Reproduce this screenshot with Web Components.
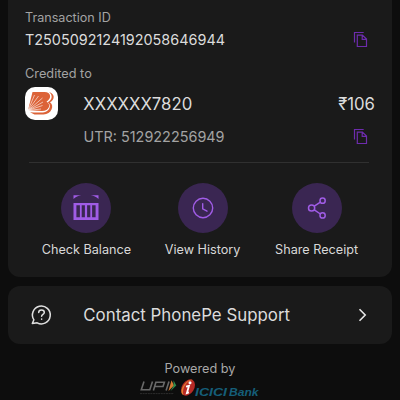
<!DOCTYPE html>
<html lang="en">
<head>
<meta charset="utf-8">
<title>Transaction details</title>
<style>
html,body{margin:0;height:400px;overflow:hidden;background:#0d0d0d}
body{font-family:Inter,"Noto Sans",sans-serif;color:#dcdcdc}
</style>
</head>
<body>
<receipt-page></receipt-page>
<script>
function define(name, html) {
  const template = document.createElement('template');
  template.innerHTML = html;
  customElements.define(name, class extends HTMLElement {
    constructor() {
      super();
      this.attachShadow({ mode: 'open' }).append(template.content.cloneNode(true));
    }
  });
}

define('copy-icon', `<style>:host{display:block;width:16px;height:18px}svg{display:block}</style>
<svg width="16" height="18" viewBox="0 0 16 18" fill="none" stroke="#6d2cad" stroke-width="1.2">
<path d="M1.5 11.500V1.500h9.200M4.300 4.100h5.100l4.100 4v7.400H4.300zM9.200 4.300v4h4.100"/></svg>`);

define('bank-logo', `<style>:host{display:block;width:33px;height:33px;border-radius:10px;background:#fff;overflow:hidden}svg{display:block}</style>
<svg width="33" height="33" viewBox="0 0 33 33">
<path d="M7.500 5H19.500c6.800 0 7.500 6.500 2 9.700 5 2.500 2.800 9.300-4.500 9.300L3 23.300z" fill="#dc6338"/>
<path d="M24 5.300c6 1 6.200 7.500 1 10 4.800 3.200 1.500 12.200-6.500 12.200H9.500l-4.500-2.300c5 .5 9 .5 13 .3 6.500-.3 9-7.500 4.700-10.200C27.500 12.700 28 8 24 5.300z" fill="#dc6338"/>
<g stroke="#fff" stroke-width=".6"><path d="M3 23.500 9.500 8M3 23.500 13.500 9M3 23.500 17.500 11M3 23.500 18 15M3 23.500 17.500 18.500M3 23.500 16 22"/></g>
</svg>`);

define('bank-icon', `<style>:host{display:block}svg{display:block}</style>
<svg width="50" height="50" viewBox="0 0 50 50" fill="#a05ce6">
<path d="M12.500 12.300h7.700c-3.200.6-5.300 1.700-7.700 3.600zM37.500 12.300h-7.700c3.200.6 5.300 1.700 7.700 3.600z"/>
<path fill-rule="evenodd" d="M12.500 20h25v17h-25zM15.400 22.300v12h3.500v-12zM20.700 22.300v12h3.200v-12zM26.100 22.300v12h3.200v-12zM31.100 22.300v12h3.500v-12z"/></svg>`);

define('clock-icon', `<style>:host{display:block}svg{display:block}</style>
<svg width="50" height="50" viewBox="0 0 50 50" fill="none" stroke="#a05ce6" stroke-width="1.400" stroke-linecap="round">
<circle cx="25" cy="25" r="9.700"/><path d="M24.700 20.600v5.200l4.300 2.400"/></svg>`);

define('share-icon', `<style>:host{display:block}svg{display:block}</style>
<svg width="50" height="50" viewBox="0 0 50 50" fill="none" stroke="#a05ce6" stroke-width="1.500">
<circle cx="19.600" cy="25" r="3.100"/><circle cx="30.600" cy="17.700" r="2.600"/><circle cx="30.600" cy="32.400" r="2.600"/><path d="M22.300 23.200l6.100-4.100M22.300 26.800l6.100 4.200"/></svg>`);

define('help-icon', `<style>:host{display:block}svg{display:block}</style>
<svg width="22" height="22" viewBox="0 0 22 22" fill="none" stroke="#e0e0e0" stroke-width="1.500" stroke-linecap="round" stroke-linejoin="round">
<path d="M3.900 15.800A8.900 8.900 0 1 1 7.200 18.800L2.300 19.500z"/><path d="M8.700 8.500c0-1.600 1.200-2.600 2.800-2.600s2.800 1 2.800 2.500c0 1.900-2.700 2.100-2.700 3.900"/><path d="M11.600 15.100v.1"/></svg>`);

define('chevron-icon', `<style>:host{display:block}svg{display:block}</style>
<svg width="10" height="14" viewBox="0 0 10 14" fill="none" stroke="#e6e6e6" stroke-width="1.600"><path d="M2.500 1.300 8.200 7 2.500 12.700"/></svg>`);

define('ui-card', `<style>:host{display:block;box-sizing:border-box;background:#1a1a1a;border-radius:12px}</style><slot></slot>`);

define('action-button', `<style>:host{display:flex;flex-direction:column;align-items:center}
.disc{width:50px;height:50px;border-radius:50%;background:#3a2652}
.label{margin-top:9px;font-size:12.65px;line-height:16px;color:#d8d8d8;white-space:nowrap}</style>
<div class="disc"><slot name="icon"></slot></div><div class="label"><slot></slot></div>`);

define('payment-brands', `<style>:host{display:flex;justify-content:center;align-items:flex-start}svg{display:block}text{font-family:"Liberation Sans",Arial,sans-serif;font-style:italic;font-weight:700}</style>
<svg width="124" height="20" viewBox="138 380 124 20">
<g fill="none" stroke="#696969" stroke-width="1.600"><path d="M144 384.400l-2.700 8.300h8.500l2.700-8.300M153.400 393.500l2.500-8.300h8.500l-1.400 4.300h-8M169 384.400l-2.900 9.100"/></g>
<path d="M171.500 383.300l2.500 5.300-5.500 5.500z" fill="#d77a32"/><path d="M173.500 383.300l2.800 5.300-5.700 5.500 3-5.500z" fill="#2f8a4b"/>
<path d="M140 396.600h34" stroke="#2c2c2c" stroke-width="1" stroke-dasharray="2 .6"/>
<ellipse cx="188" cy="390.500" rx="6.100" ry="8.800" transform="rotate(32 188 390.500)" fill="#b72a26"/>
<path d="M183.500 398c-3-1-2.600-5.700.5-10.200 2.600-3.800 6.400-6 8.600-4.800-3.500.4-5.800 2.500-7.700 5.600-2 3.500-2.400 7-1.400 9.400z" fill="#e17b2d"/>
<circle cx="190" cy="385.700" r="1.500" fill="#fff"/><path d="M186 389.700l3-.9-2.100 7.300 2-.7" fill="none" stroke="#fff" stroke-width="1.800"/>
<text x="195" y="399" font-size="11.500" textLength="32" lengthAdjust="spacingAndGlyphs" fill="#155e78">ICICI</text>
<text x="229" y="399" font-size="11" textLength="29.500" lengthAdjust="spacingAndGlyphs" fill="#155e78">Bank</text>
</svg>`);

define('receipt-page', `<style>
:host{display:block;height:400px;overflow:hidden}
.details{height:277px;margin:0 8px;padding:10px 17px 0;border-radius:0 0 12px 12px}
.cap{font-size:12.6px;line-height:16px;color:#a3a3a3}
.row{display:flex;align-items:center;justify-content:space-between}
.id{margin-top:3px;height:20px;font-size:14.42px}
.id copy-icon,.utr copy-icon{margin:2px 6px 0 0}
.credited{margin-top:17px;font-size:12.75px}
.account{display:grid;grid-template-columns:58.3px 1fr auto;align-items:center;height:33px;margin-top:5px;font-size:16.75px}
.utr{margin:6px 0 0 58.5px;height:20px;font-size:14.42px;color:#a3a3a3}
hr{border:0;height:1px;background:#303030;margin:16px 6px 0 4px}
.actions{display:grid;grid-template-columns:116.4px 116px 112px;margin:20px 0 0 3.2px}
.support{height:58px;margin:9px 8px 0;padding:0 25px 0 22px}
.support .inner{display:grid;grid-template-columns:53.3px 1fr auto;align-items:center;height:58px;font-size:16.85px}
.powered{margin-top:17px;font-size:12.7px;line-height:16px;text-align:center;color:#a8a8a8}
</style>
<ui-card class="details">
 <div class="cap">Transaction ID</div>
 <div class="row id"><span>T2505092124192058646944</span><copy-icon></copy-icon></div>
 <div class="cap credited">Credited to</div>
 <div class="account"><bank-logo></bank-logo><span>XXXXXX7820</span><span>₹106</span></div>
 <div class="row utr"><span>UTR: 512922256949</span><copy-icon></copy-icon></div>
 <hr>
 <div class="actions">
  <action-button><bank-icon slot="icon"></bank-icon>Check Balance</action-button>
  <action-button><clock-icon slot="icon"></clock-icon>View History</action-button>
  <action-button><share-icon slot="icon"></share-icon>Share Receipt</action-button>
 </div>
</ui-card>
<ui-card class="support"><div class="inner"><help-icon></help-icon><span>Contact PhonePe Support</span><chevron-icon></chevron-icon></div></ui-card>
<div class="powered">Powered by</div>
<payment-brands></payment-brands>`);
</script>
</body>
</html>
